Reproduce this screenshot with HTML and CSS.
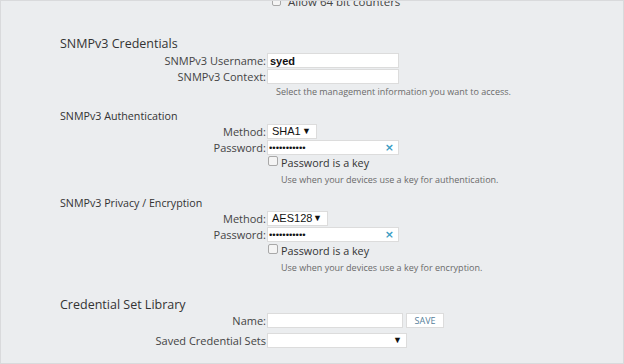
FILE: index.html
```html
<!DOCTYPE html>
<html>
  <head>
    <meta charset="utf-8">
    <title>SNMPv3 Credentials</title>
    <link rel="stylesheet" href="styles.css">
  </head>
  <body>
    <main class="page">
      <div class="grid top">
        <span></span>
        <label class="check"><span class="box"></span>Allow 64 bit counters</label>
      </div>

      <h2 class="title first">SNMPv3 Credentials</h2>
      <div class="grid">
        <label class="lbl">SNMPv3 Username:</label>
        <input class="text bold" type="text" value="syed">
        <label class="lbl">SNMPv3 Context:</label>
        <input class="text" type="text">
        <span></span>
        <p class="help indent">Select the management information you want to access.</p>
      </div>

      <h3 class="sub">SNMPv3 Authentication</h3>
      <div class="grid">
        <label class="lbl">Method:</label>
        <div class="select sm">SHA1 <span class="arrow">▼</span></div>
        <label class="lbl">Password:</label>
        <div class="pass"><input type="password" value="secretpass1"><span class="clear">×</span></div>
        <span></span>
        <label class="check key"><span class="box"></span>Password is a key</label>
        <span></span>
        <p class="help">Use when your devices use a key for authentication.</p>
      </div>

      <h3 class="sub second">SNMPv3 Privacy / Encryption</h3>
      <div class="grid">
        <label class="lbl">Method:</label>
        <div class="select md">AES128 <span class="arrow">▼</span></div>
        <label class="lbl">Password:</label>
        <div class="pass"><input type="password" value="secretpass2"><span class="clear">×</span></div>
        <span></span>
        <label class="check key lower"><span class="box"></span>Password is a key</label>
        <span></span>
        <p class="help">Use when your devices use a key for encryption.</p>
      </div>

      <h2 class="title lib">Credential Set Library</h2>
      <div class="grid lib-rows">
        <label class="lbl">Name:</label>
        <div class="inline"><input class="text name" type="text"><button class="save">SAVE</button></div>
        <label class="lbl">Saved Credential Sets</label>
        <div class="select lg"><span class="arrow">▼</span></div>
      </div>
    </main>
  </body>
</html>
```

FILE: styles.css
```css
html, body {
  margin: 0;
  padding: 0;
}
body {
  font-family: "Open Sans", sans-serif;
  color: #444;
  background: #fff;
}
.page {
  box-sizing: border-box;
  width: 624px;
  height: 364px;
  overflow: hidden;
  background: #ebedef;
  border: 1px solid #d9dadc;
}

.grid {
  display: grid;
  grid-template-columns: 265px 240px;
  column-gap: 1px;
  row-gap: 1px;
  align-items: center;
  justify-content: start;
}
.grid.top {margin-top: -6px;}
.grid.top .check {font-size: 11.5px; color: #444;}
.grid.top .check .box {margin: 0 7px 0 5px; width: 9px; height: 8px;}
.grid.lib-rows {row-gap: 5px;}

.title, .sub {
  margin: 0;
  padding-left: 59px;
  font-weight: normal;
  line-height: 16px;
  color: #333;
}
.title {font-size: 12.5px;}
.title.first {margin-top: 27px; margin-bottom: 1px;}
.sub {font-size: 10.7px; margin-top: 10px; margin-bottom: 0;}
.sub.second {margin-top: 8.5px;}
.title.lib {margin-top: 23px; margin-bottom: 0;}

.lbl {
  text-align: right;
  font-size: 11px;
  line-height: 15px;
  white-space: nowrap;
  color: #444;
}

.text {
  box-sizing: border-box;
  width: 132px;
  height: 15px;
  margin: 0;
  padding: 0 2px;
  border: 1px solid #dcdcdc;
  background: #fff;
  font: 11px "Liberation Sans", Arial, sans-serif;
  color: #111;
  outline: none;
}
.text.bold {font-weight: bold;}
.text.name {width: 136px;}

.select {
  box-sizing: border-box;
  height: 15px;
  padding: 0 5px 0 4px;
  border: 1px solid #dcdcdc;
  background: #fff;
  font: 11px/13px "Liberation Sans", Arial, sans-serif;
  color: #111;
  display: flex;
  align-items: center;
  justify-content: space-between;
}
.select.sm {width: 50px;}
.select.md {width: 61px;}
.select.lg {width: 140px; justify-content: flex-end; padding-right: 4px;}
.arrow {font-size: 9px;}

.pass {
  box-sizing: border-box;
  width: 132px;
  height: 15px;
  display: flex;
  align-items: center;
  border: 1px solid #dcdcdc;
  background: #fff;
}
.pass input {
  flex: 1;
  min-width: 0;
  border: 0;
  padding: 0 1px;
  margin: 0;
  height: 13px;
  font: 9.5px "Liberation Sans", Arial, sans-serif;
  color: #111;
  outline: none;
  background: transparent;
}
.clear {
  color: #3a9cc4;
  font: bold 11px/11px "DejaVu Sans", sans-serif;
  padding-right: 4px;
}

.check {
  display: flex;
  align-items: center;
  font-size: 11px;
  line-height: 14px;
  white-space: nowrap;
  color: #555;
}
.check .box {
  box-sizing: border-box;
  width: 10px;
  height: 10px;
  margin: 0 3px 0 1px;
  border: 1px solid #a8a8a8;
  border-radius: 2px;
  background: #f4f4f4;
}
.check.key {font-size: 10.8px; color: #333;}
.check.key .box {align-self: flex-start; margin-top: 0;}
.check.key.lower {margin-top: 1px;}

.help {
  margin: 2px 0 0;
  padding-left: 14px;
  font-size: 9px;
  line-height: 13px;
  color: #6a6a6a;
  white-space: nowrap;
}
.help.indent {padding-left: 9px; margin-top: 1px; line-height: 12px;}

.inline {
  display: flex;
  align-items: center;
  gap: 3px;
}
.save {
  box-sizing: border-box;
  height: 15px;
  width: 38px;
  padding: 0;
  border: 1px solid #dcdcdc;
  background: #fff;
  font: 9px "Open Sans", sans-serif;
  color: #55809a;
}
```
